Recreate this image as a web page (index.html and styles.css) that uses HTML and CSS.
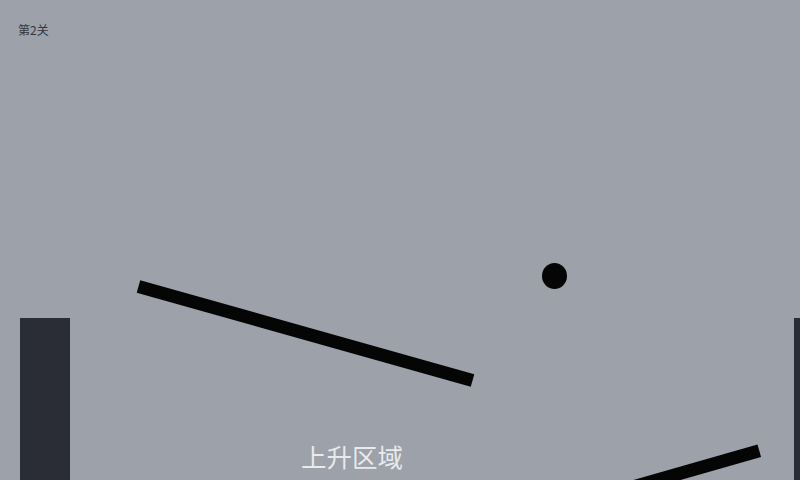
FILE: index.html
```html
<!DOCTYPE html>
<html lang="zh">
<head>
<meta charset="utf-8">
<title>第2关</title>
<link rel="stylesheet" href="styles.css">
</head>
<body>
<div class="stage">
  <div class="level">第2关</div>
  <div class="pillar pillar-left"></div>
  <div class="pillar pillar-right"></div>
  <div class="plank plank-a"></div>
  <div class="plank plank-b"></div>
  <div class="ball"></div>
  <div class="zone-label">上升区域</div>
</div>
</body>
</html>
```
FILE: styles.css
```css
html, body {
  margin: 0;
  padding: 0;
}
body {
  background: #9ca1aa;
  font-family: "Noto Sans CJK SC", "Noto Sans", sans-serif;
}
.stage {
  position: relative;
  width: 800px;
  height: 480px;
  overflow: hidden;
  background: #9ca1aa;
}
.level {
  padding: 24px 0 0 18px;
  font-size: 12px;
  line-height: 12px;
  color: #33363c;
}
.pillar {
  position: absolute;
  top: 318px;
  width: 50px;
  height: 200px;
  background: #2a2d35;
}
.pillar-left { left: 20px; }
.pillar-right { left: 794px; }
.plank {
  position: absolute;
  width: 347px;
  height: 13px;
  background: #050506;
}
.plank-a {
  left: 131.5px;
  top: 326.8px;
  transform: rotate(15.7deg);
}
.plank-b {
  left: 419px;
  top: 492.2px;
  transform: rotate(-16deg);
}
.ball {
  position: absolute;
  left: 541.5px;
  top: 262.5px;
  width: 25px;
  height: 26px;
  border-radius: 50%;
  background: #050506;
}
.zone-label {
  position: absolute;
  left: 301px;
  top: 440px;
  font-size: 25.5px;
  line-height: 32px;
  color: rgba(255, 255, 255, 0.78);
}
```
